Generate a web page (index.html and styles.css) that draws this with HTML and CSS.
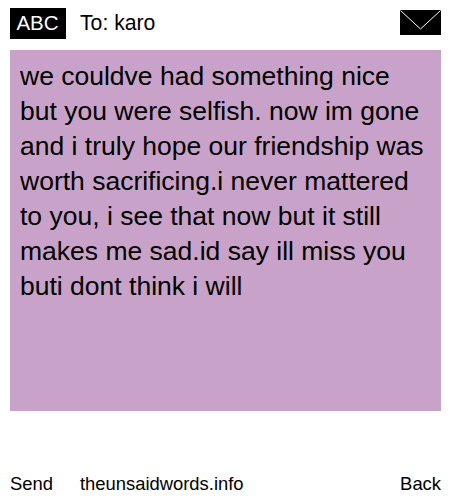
FILE: index.html
```html
<!DOCTYPE html>
<html lang="en">
<head>
    <meta charset="UTF-8">
    <meta name="viewport" content="width=device-width, initial-scale=1.0">
    <title>The Unsaid Words</title>
    <link rel="stylesheet" href="styles.css">
</head>
<body>
    <div class="container">
        <div class="header">
            <div class="abc-box">ABC</div>
            <div class="to-line">To: karo</div>
            <svg class="envelope" width="41" height="25" viewBox="0 0 41 25">
                <rect width="41" height="25" fill="#000000"/>
                <path d="M0.5 0.5 L20.5 19 L40.5 0.5" fill="none" stroke="#FFFFFF" stroke-width="1"/>
            </svg>
        </div>
        <div class="message">we couldve had something nice but you were selfish. now im gone and i truly hope our friendship was worth sacrificing.i never mattered to you, i see that now but it still makes me sad.id say ill miss you buti dont think i will</div>
        <div class="footer">
            <span class="send">Send</span>
            <span class="site">theunsaidwords.info</span>
            <span class="back">Back</span>
        </div>
    </div>
</body>
</html>
```

FILE: styles.css
```css
body {
    font-family: "Liberation Sans", Arial, sans-serif;
    margin: 0;
    padding: 0;
    background-color: #FFFFFF;
    color: #000000;
}
.container {
    width: 431px;
    height: 500px;
    padding: 8px 9px 0 10px;
    box-sizing: content-box;
}
.header {
    display: flex;
    align-items: flex-start;
    height: 31px;
}
.abc-box {
    width: 56px;
    height: 31px;
    padding-right: 1px;
    box-sizing: border-box;
    line-height: 30px;
    background-color: #000000;
    color: #FFFFFF;
    font-size: 20.5px;
    text-align: center;
}
.to-line {
    margin-left: 14px;
    font-size: 21.2px;
    line-height: 30px;
}
.envelope {
    display: block;
    margin-left: auto;
    margin-top: 2px;
}
.message {
    margin-top: 11px;
    height: 361px;
    padding: 9px 10px 0 10px;
    box-sizing: border-box;
    background-color: #C8A2C8;
    font-size: 26.5px;
    line-height: 35px;
}
.footer {
    display: flex;
    margin-top: 62px;
    font-size: 18.4px;
    line-height: 22px;
}
.site {
    margin-left: 27px;
}
.back {
    margin-left: auto;
}
```
